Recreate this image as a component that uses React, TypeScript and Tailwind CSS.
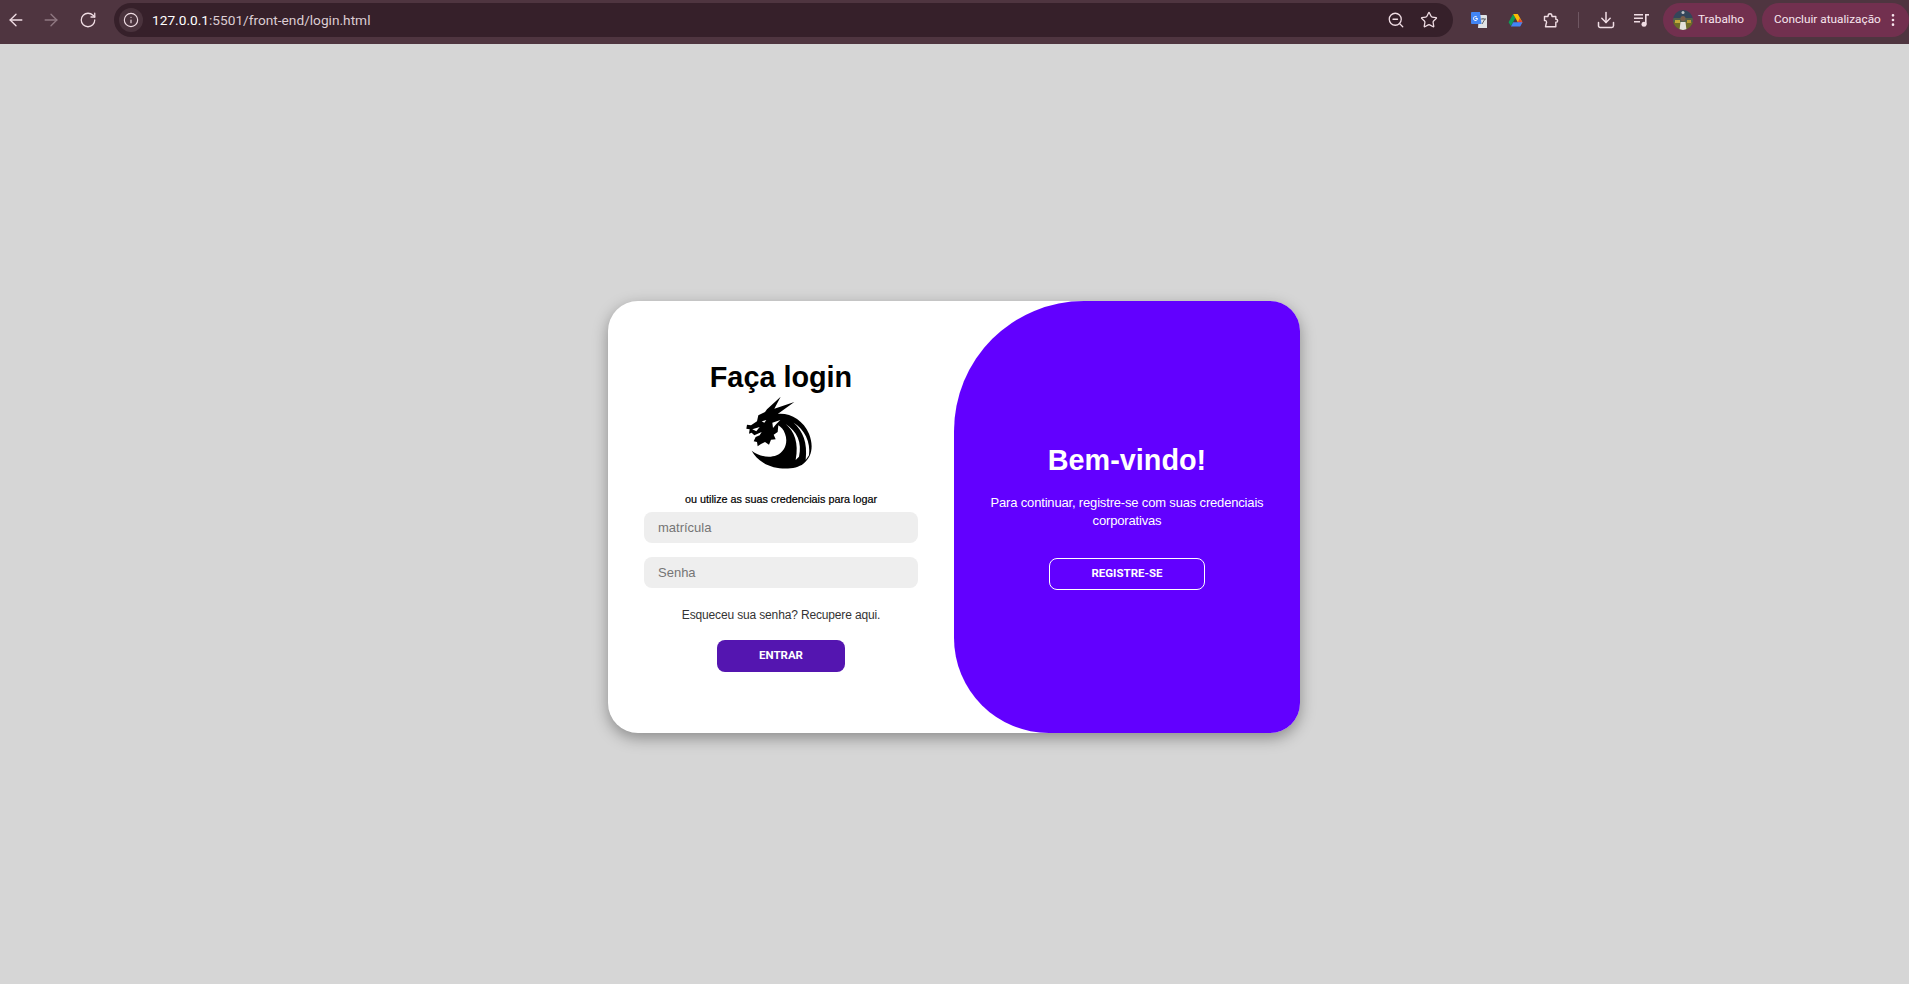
import { ArrowLeft, ArrowRight, RotateCw, Info, ZoomOut, Star, Download, EllipsisVertical } from 'lucide-react';

function Dragon() {
  return (
    <svg viewBox="0 0 240 252" className="w-[80px] h-[84px]" fill="#000">
      <path d="M96 52 L137 14 L118 50 L178 30 L128 66 C165 62 205 85 222 125 C236 160 232 195 205 215 C180 235 120 235 85 212 C70 203 58 190 50 176 C72 192 100 200 125 190 C150 180 160 150 150 125 C146 113 138 105 130 100 L128 120 L116 128 L122 142 L108 143 L102 158 L90 150 L78 156 L68 163 L66 150 L56 148 L62 135 L74 130 L80 120 L58 130 L50 122 L42 125 L44 112 L34 110 L36 98 L48 100 L66 88 L70 70 L90 60 Z" />
      <path d="M176 92 C204 118 218 150 212 204 L222 190 C228 150 208 112 176 92 Z" fill="#fff" />
      <path d="M152 96 C178 118 192 152 182 204 L192 194 C202 152 186 118 152 96 Z" fill="#fff" />
      <path d="M112 92 L136 84 L124 96 L114 108 Z" fill="#fff" />
      <path d="M52 112 L74 105 L64 118 Z" fill="#fff" />
      <path d="M80 88 L94 84 L88 92 Z" fill="#fff" />
    </svg>
  );
}

function GoogleTranslate() {
  return (
    <svg viewBox="0 0 16 16" className="w-4 h-4 shrink-0">
      <path d="M8 3h7a1 1 0 0 1 1 1v12H7z" fill="#dfe3e6" />
      <path d="M1 0h8l1.500 12H1a1 1 0 0 1-1-1V1a1 1 0 0 1 1-1z" fill="#4285f4" />
      <path d="M10 7h5M12 6v1M11 12l3-5" stroke="#5f6368" strokeWidth="1" fill="none" />
      <path d="M6.500 6.500a2 2 0 1 1-.6-1.400" fill="none" stroke="#fff" strokeWidth="1" />
      <path d="M4.500 6.500h2" stroke="#fff" strokeWidth="1" />
    </svg>
  );
}

function Drive() {
  return (
    <svg viewBox="0 0 16 14" className="w-[15px] h-[13px] shrink-0">
      <path d="M5.500 0L0.500 9 3 13 8 4z" fill="#0f9d58" />
      <path d="M5.500 0H10.500L15.500 9H10.500z" fill="#fbbc04" />
      <path d="M12.500 4.500L15.500 9 13 13 10.500 9z" fill="#ea4335" />
      <path d="M5.500 9H15.500L13 13.500H3z" fill="#4285f4" />
    </svg>
  );
}

function Extensions() {
  return (
    <svg viewBox="0 0 16 15" className="w-4 h-[15px] shrink-0" fill="none" stroke="#f0dde4" strokeWidth="1.400" strokeLinejoin="round">
      <path d="M1.500 3.500H5C5 1.500 6 .8 7 .8S9 1.500 9 3.500H12.800V6.200C15.300 6.200 15.300 9.300 12.800 9.300V13.800H2.500L3.200 10.500C4.200 9 3 7 1.500 7.500Z" />
    </svg>
  );
}

function MediaControls() {
  return (
    <svg viewBox="0 0 15 14" className="w-[15px] h-[14px] shrink-0" fill="#f0dde4">
      <rect x="0" y="1" width="9" height="1.500" />
      <rect x="0" y="4.500" width="9" height="1.500" />
      <rect x="0" y="8" width="6" height="1.500" />
      <rect x="11" y="1" width="1.600" height="10.500" />
      <rect x="11" y="1" width="4" height="1.600" />
      <circle cx="10" cy="11.300" r="2.500" />
    </svg>
  );
}

function Avatar() {
  return (
    <svg viewBox="0 0 20 20" className="w-5 h-5 rounded-full shrink-0">
      <rect width="20" height="20" fill="#34465a" />
      <rect y="8" width="20" height="4" fill="#55604a" />
      <rect y="12" width="20" height="8" fill="#6f6c28" />
      <rect x="2" y="10" width="5" height="3" fill="#c2a93a" />
      <rect x="14" y="10" width="4" height="3" fill="#b79a34" />
      <path d="M6.500 20l1-8h5l1 8z" fill="#e4e2dc" />
      <circle cx="10" cy="8.500" r="2.500" fill="#7d5e4a" />
      <circle cx="10" cy="2.500" r="1.500" fill="#bfc3c6" />
    </svg>
  );
}

function BrowserBar() {
  return (
    <div className="h-11 shrink-0 flex items-center pb-[4px] bg-[#4f3540] text-[#f0dde4] font-['Roboto',sans-serif]">
      <div className="flex items-center w-[114px] pl-[6px]">
        <ArrowLeft className="w-5 h-5" strokeWidth={1.6} />
        <ArrowRight className="ml-[15px] w-5 h-5 opacity-40" strokeWidth={1.6} />
        <RotateCw className="ml-[18px] w-[18px] h-[18px]" strokeWidth={1.7} />
      </div>
      <div className="flex-1 h-[34px] rounded-full bg-[#36202a] flex items-center pl-[5px] pr-[15px] mr-[18px]">
        <div className="w-6 h-6 rounded-full bg-[#4a333d] flex items-center justify-center">
          <Info className="w-4 h-4" strokeWidth={1.7} />
        </div>
        <span className="ml-[9px] text-[13.7px] text-[#dccdd3]">
          <span className="text-white">127.0.0.1</span>:5501/front-end/login.html
        </span>
        <div className="ml-auto flex items-center gap-[15px]">
          <ZoomOut className="w-[18px] h-[18px]" strokeWidth={1.7} />
          <Star className="w-[18px] h-[18px]" strokeWidth={1.7} />
        </div>
      </div>
      <div className="flex items-center">
        <GoogleTranslate />
        <div className="ml-[21px] flex"><Drive /></div>
        <div className="ml-[20px] flex"><Extensions /></div>
        <div className="ml-[19px] w-px h-4 bg-[#6f5762]" />
        <Download className="ml-[17px] w-5 h-5" strokeWidth={1.8} />
        <div className="ml-[18px] flex"><MediaControls /></div>
      </div>
      <div className="ml-[14px] h-[34px] w-[94px] rounded-full bg-[#72304f] flex items-center pl-[10px] gap-[5px] text-[11.8px] text-[#f8e6ee]">
        <Avatar />
        Trabalho
      </div>
      <div className="ml-[5px] h-[34px] w-[147px] rounded-full bg-[#72304f] flex items-center pl-[12px] text-[11.8px] text-[#f8e6ee] whitespace-nowrap">
        Concluir atualização
        <EllipsisVertical className="ml-[4px] w-4 h-4" />
      </div>
    </div>
  );
}

export default function App() {
  return (
    <div className="h-screen flex flex-col bg-[#d6d6d6] font-['Liberation_Sans',sans-serif] overflow-hidden">
      <BrowserBar />
      <div className="flex-1 flex justify-center pt-[257px] pr-px">
        <div className="w-[692px] h-[432px] flex rounded-[30px] bg-white shadow-[0_5px_15px_rgba(0,0,0,0.35)]">
          <div className="w-[346px] px-[36px] flex flex-col items-center text-center pt-[60px]">
            <h1 className="text-[28.8px] leading-[33px] font-bold text-black">Faça login</h1>
            <div className="-mt-[2px] mr-[12px] flex"><Dragon /></div>
            <p className="mt-[17px] text-[10.8px] leading-[13px] text-black [-webkit-text-stroke:0.2px_black]">ou utilize as suas credenciais para logar</p>
            <input placeholder="matrícula" className="mt-[6px] w-full h-[31px] shrink-0 rounded-lg bg-[#eeeeee] px-[14px] text-[13px] outline-none placeholder:text-[#757575]" />
            <input placeholder="Senha" className="mt-[14px] w-full h-[31px] shrink-0 rounded-lg bg-[#eeeeee] px-[14px] text-[13px] outline-none placeholder:text-[#757575]" />
            <p className="mt-[20px] text-[12px] tracking-[-0.15px] leading-[15px] text-[#333333]">Esqueceu sua senha? Recupere aqui.</p>
            <button className="mt-[17px] w-[128px] h-[32px] shrink-0 rounded-lg bg-[#5415b0] text-white text-[11.5px] font-bold font-['Roboto',sans-serif]">ENTRAR</button>
          </div>
          <div className="w-[346px] rounded-[130px_30px_30px_95px] bg-[#6200ff] text-white flex flex-col items-center text-center px-[30px] pt-[143px]">
            <h2 className="text-[28.8px] leading-[33px] font-bold">Bem-vindo!</h2>
            <p className="mt-[17px] text-[13px] tracking-[-0.17px] leading-[18px]">Para continuar, registre-se com suas credenciais corporativas</p>
            <button className="mt-[28px] w-[156px] h-[32px] shrink-0 rounded-lg border border-white text-white text-[11.5px] font-bold font-['Roboto',sans-serif]">REGISTRE-SE</button>
          </div>
        </div>
      </div>
    </div>
  );
}
